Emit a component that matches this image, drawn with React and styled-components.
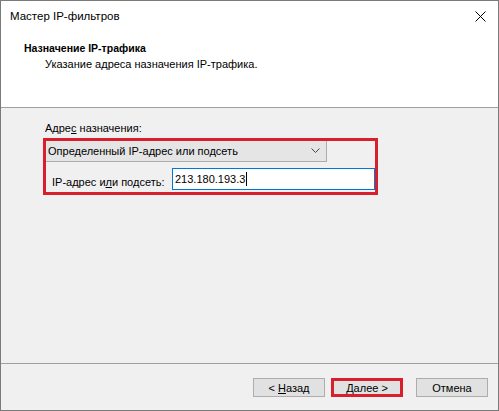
import React from "react";
import styled, { createGlobalStyle } from "styled-components";

const GlobalStyle = createGlobalStyle`
  html, body {
    margin: 0;
    padding: 0;
    background: #ffffff;
  }
  body {
    font-family: "Segoe UI", "Liberation Sans", Arial, sans-serif;
    font-size: 11px;
    color: #000;
  }
`;

const Window = styled.div`
  width: 499px;
  height: 411px;
  box-sizing: border-box;
  border: 1px solid #7a7a7a;
  display: flex;
  flex-direction: column;
  background: #f0f0f0;
`;

const TitleBar = styled.div`
  height: 30px;
  background: #fff;
  display: flex;
  align-items: center;
  justify-content: space-between;
  padding: 0 9px 0 9px;
  font-size: 11.5px;
`;

const Close = styled.svg`
  width: 11px;
  height: 11px;
  margin-right: 3px;
`;

const Header = styled.div`
  height: 77px;
  background: #fff;
  border-bottom: 1px solid #a0a0a0;
  padding: 11px 0 0 23px;
  box-sizing: border-box;
  display: flex;
  flex-direction: column;
  gap: 4px;
`;

const Heading = styled.div`
  font-weight: bold;
  font-size: 10.5px;
`;

const SubHeading = styled.div`
  padding-left: 21px;
`;

const Body = styled.div`
  flex: 1;
  padding: 12px 0 0 42px;
  display: flex;
  flex-direction: column;
`;

const FieldLabel = styled.div`
  padding-left: 2px;
  height: 16px;
  line-height: 16px;
  margin-bottom: 2px;
`;

const Highlight = styled.div`
  width: 335px;
  height: 57px;
  box-sizing: border-box;
  border: 3px solid #d7202c;
  display: flex;
  flex-direction: column;
  gap: 8px;
`;

const Combo = styled.div`
  width: 281px;
  height: 21px;
  box-sizing: border-box;
  border: 1px solid #adadad;
  border-left: none;
  border-top: none;
  background: #e5e5e5;
  display: flex;
  align-items: center;
  justify-content: space-between;
  padding: 0 6px 0 2px;
`;

const Row = styled.div`
  display: flex;
  align-items: center;
  padding-left: 6px;
`;

const RowLabel = styled.span`
  width: 120px;
  flex-shrink: 0;
  white-space: nowrap;
  padding-top: 3px;
`;

const TextBox = styled.div`
  width: 203px;
  height: 22px;
  margin-top: -2px;
  box-sizing: border-box;
  border: 1px solid #0078d7;
  background: #fff;
  display: flex;
  align-items: center;
  padding-left: 2px;
`;

const Caret = styled.span`
  display: inline-block;
  width: 1px;
  height: 14px;
  background: #000;
  margin-left: 1px;
`;

const Footer = styled.div`
  height: 47px;
  border-top: 1px solid #a0a0a0;
  box-sizing: border-box;
  display: flex;
  justify-content: flex-end;
  align-items: flex-start;
  padding: 14px 10px 0 0;
  gap: 6px;
`;

const Button = styled.div`
  width: 72px;
  height: 19px;
  box-sizing: border-box;
  border: 1px solid ${(p) => (p.$marked ? "#0078d7" : "#adadad")};
  background: #e1e1e1;
  display: flex;
  align-items: center;
  justify-content: center;
  outline: ${(p) => (p.$marked ? "3px solid #d7202c" : "none")};
  outline-offset: -3px;
  margin-right: ${(p) => (p.$gapAfter ? "7px" : "0")};
`;

const U = styled.span`
  text-decoration: underline;
`;

export default function App() {
  return (
    <>
      <GlobalStyle />
      <Window>
        <TitleBar>
          <span>Мастер IP-фильтров</span>
          <Close viewBox="0 0 11 11">
            <path d="M0.5 0.5 L10.5 10.5 M10.5 0.5 L0.5 10.5" stroke="#000" strokeWidth="1" />
          </Close>
        </TitleBar>
        <Header>
          <Heading>Назначение IP-трафика</Heading>
          <SubHeading>Указание адреса назначения IP-трафика.</SubHeading>
        </Header>
        <Body>
          <FieldLabel>
            Адре<U>с</U> назначения:
          </FieldLabel>
          <Highlight>
            <Combo>
              <span>Определенный IP-адрес или подсеть</span>
              <svg width="9" height="6" viewBox="0 0 9 6">
                <path d="M0.5 0.5 L4.5 4.5 L8.5 0.5" fill="none" stroke="#444" strokeWidth="1" />
              </svg>
            </Combo>
            <Row>
              <RowLabel>
                IP-адрес и<U>л</U>и подсеть:
              </RowLabel>
              <TextBox>
                213.180.193.3
                <Caret />
              </TextBox>
            </Row>
          </Highlight>
        </Body>
        <Footer>
          <Button>
            &lt;&nbsp;<U>Н</U>азад
          </Button>
          <Button $marked $gapAfter>
            <U>Д</U>алее &gt;
          </Button>
          <Button>Отмена</Button>
        </Footer>
      </Window>
    </>
  );
}
